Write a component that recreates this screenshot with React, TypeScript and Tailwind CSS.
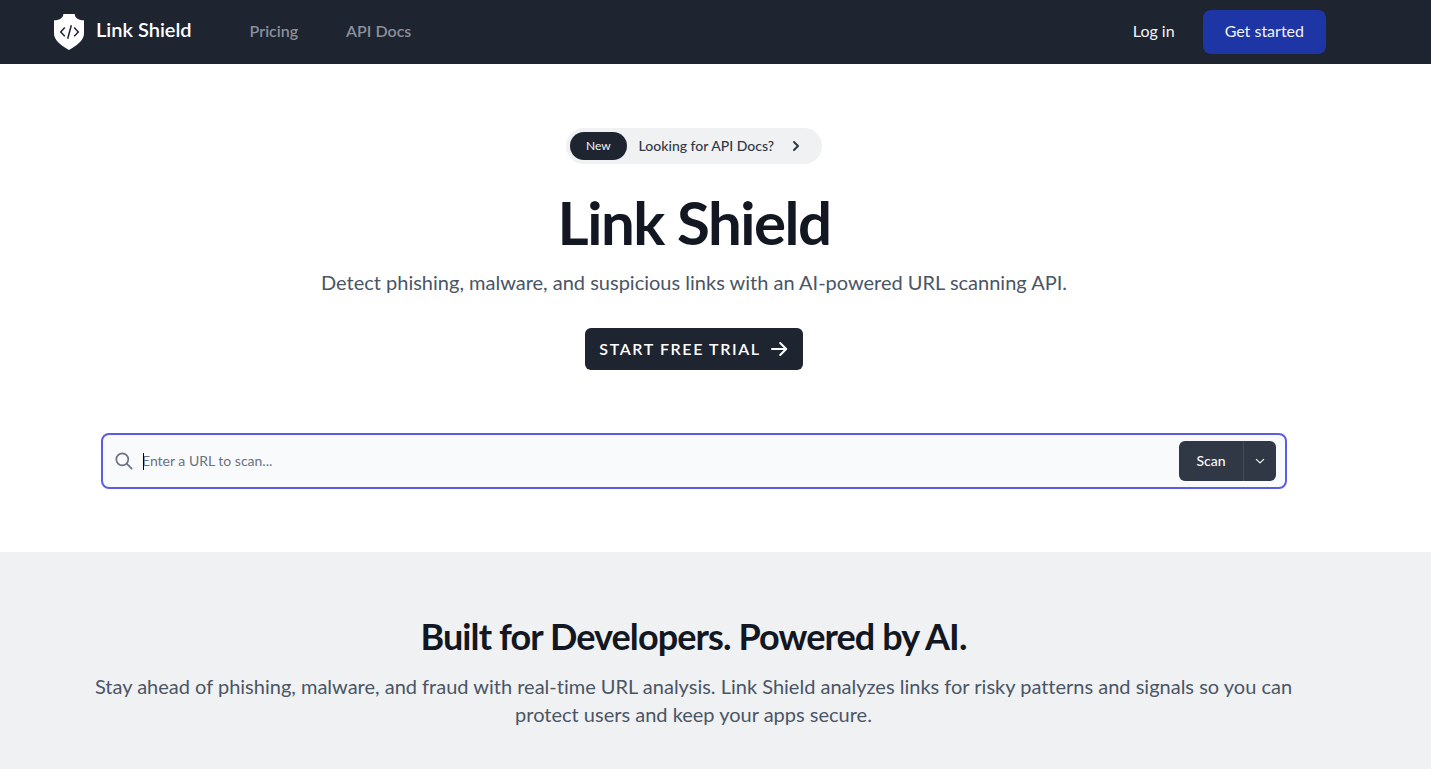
import type { SVGProps } from 'react';

function ShieldLogo(props: SVGProps<SVGSVGElement>) {
  return (
    <svg viewBox="0 0 30 36" fill="none" aria-hidden="true" {...props}>
      <path
        d="M9.4 0h11.3c.3 3.600 3 6.200 9.300 6.300v13.200C30 25.500 24.500 30.500 15 36 5.500 30.500 0 25.500 0 19.500V6.300C6.300 6.200 9.100 3.600 9.400 0Z"
        fill="#fff"
      />
      <path
        d="M10.800 13.600 6.700 18l4.100 4.200M20.200 13.600l4.100 4.400-4.100 4.200M17.300 11.300l-3.600 13.500"
        stroke="#1e2430"
        strokeWidth="1.500"
      />
    </svg>
  );
}

function ChevronRight(props: SVGProps<SVGSVGElement>) {
  return (
    <svg viewBox="0 0 20 20" fill="currentColor" aria-hidden="true" {...props}>
      <path
        fillRule="evenodd"
        clipRule="evenodd"
        d="M7.293 14.707a1 1 0 010-1.414L10.586 10 7.293 6.707a1 1 0 011.414-1.414l4 4a1 1 0 010 1.414l-4 4a1 1 0 01-1.414 0z"
      />
    </svg>
  );
}

function ArrowRight(props: SVGProps<SVGSVGElement>) {
  return (
    <svg
      viewBox="0 0 20 20"
      fill="none"
      stroke="currentColor"
      strokeWidth="2"
      strokeLinecap="round"
      strokeLinejoin="round"
      aria-hidden="true"
      {...props}
    >
      <path d="M3 10h14M11.200 4 17.200 10l-6 6" />
    </svg>
  );
}

function SearchIcon(props: SVGProps<SVGSVGElement>) {
  return (
    <svg
      viewBox="0 0 18 18"
      fill="none"
      stroke="currentColor"
      strokeWidth="1.700"
      strokeLinecap="round"
      aria-hidden="true"
      {...props}
    >
      <circle cx="7.300" cy="7.300" r="6" />
      <path d="m11.700 11.700 5 5" />
    </svg>
  );
}

function ChevronDown(props: SVGProps<SVGSVGElement>) {
  return (
    <svg
      viewBox="0 0 12 12"
      fill="none"
      stroke="currentColor"
      strokeWidth="1.100"
      strokeLinecap="round"
      strokeLinejoin="round"
      aria-hidden="true"
      {...props}
    >
      <path d="m2.300 4.300 3.700 3.600 3.700-3.600" />
    </svg>
  );
}

function Header() {
  return (
    <header className="flex h-16 items-center bg-[#1e2430] pr-[105px] pl-[54px]">
      <a href="#" className="flex items-center gap-3 text-white">
        <ShieldLogo className="h-9 w-[30px]" />
        <span className="pb-1.5 text-xl font-semibold">Link Shield</span>
      </a>
      <nav className="ml-[58px] flex gap-12 pb-0.5 font-semibold text-[#8a909c]">
        <a href="#pricing">Pricing</a>
        <a href="#docs">API Docs</a>
      </nav>
      <div className="ml-auto flex items-center gap-7 text-gray-100">
        <a href="#login" className="pb-0.5">
          Log in
        </a>
        <a
          href="#signup"
          className="flex h-11 items-center rounded-lg bg-[#1e35a5] px-[22px] pb-0.5"
        >
          Get started
        </a>
      </div>
    </header>
  );
}

function ScanForm() {
  return (
    <form
      className="mt-[63px] flex h-14 w-full items-center rounded-lg border-2 border-[#5d5ce6] bg-[#f9fafc] pr-[9px] pl-3"
      onSubmit={(e) => e.preventDefault()}
    >
      <label htmlFor="scan-url" aria-label="URL to scan">
        <SearchIcon className="size-[18px] text-gray-500" />
      </label>
      <div className="relative ml-[9px] flex min-w-0 flex-1 items-center">
        <input
          id="scan-url"
          type="text"
          autoFocus
          placeholder="Enter a URL to scan..."
          className="peer w-full bg-transparent text-sm text-black caret-transparent outline-none placeholder:text-gray-500 not-placeholder-shown:caret-black"
        />
        <span
          aria-hidden="true"
          className="pointer-events-none absolute left-px h-[17px] w-px bg-black peer-not-placeholder-shown:hidden"
        />
      </div>
      <div className="flex h-10 overflow-hidden rounded-md bg-[#303846] text-gray-50">
        <button type="submit" className="w-16 text-sm font-medium">
          Scan
        </button>
        <button
          type="button"
          aria-label="More scan options"
          className="flex w-[33px] items-center justify-center border-l border-[#454d5b]"
        >
          <ChevronDown className="size-3" />
        </button>
      </div>
    </form>
  );
}

export default function App() {
  return (
    <div className="flex min-h-screen flex-col bg-white font-['Lato',sans-serif] [font-variant-ligatures:none]">
      <Header />
      <main className="flex flex-1 flex-col">
        <section className="flex flex-col items-center pt-16 pr-36 pb-[63px] pl-[101px] text-center">
          <a
            href="#docs"
            className="flex h-9 items-center rounded-full bg-[#f0f1f3] pr-4 pl-1 text-sm font-medium text-[#303846]"
          >
            <span className="mr-3 flex h-7 items-center rounded-full bg-[#1e2430] px-4 text-xs font-normal text-gray-100">
              New
            </span>
            Looking for API Docs?
            <ChevronRight className="ml-3 size-5" />
          </a>
          <h1 className="mt-7 text-6xl leading-none font-bold tracking-tight text-[#121722]">
            Link Shield
          </h1>
          <p className="mt-4 text-xl text-gray-600">
            Detect phishing, malware, and suspicious links with an AI-powered URL
            scanning API.
          </p>
          <a
            href="#trial"
            className="mt-8 flex h-[42px] items-center gap-2 rounded-md bg-[#1e2430] px-3.5 font-semibold tracking-widest text-white uppercase"
          >
            Start free trial
            <ArrowRight className="size-5" />
          </a>
          <ScanForm />
        </section>
        <section className="flex-1 bg-[#f0f1f3] pt-16 pr-[116px] pb-10 pl-18 text-center">
          <h2 className="text-4xl font-bold tracking-tight text-[#121722]">
            Built for Developers. Powered by AI.
          </h2>
          <p className="mt-4 text-xl text-gray-600">
            Stay ahead of phishing, malware, and fraud with real-time URL
            analysis. Link Shield analyzes links for risky patterns and signals
            so you can protect users and keep your apps secure.
          </p>
        </section>
      </main>
    </div>
  );
}
